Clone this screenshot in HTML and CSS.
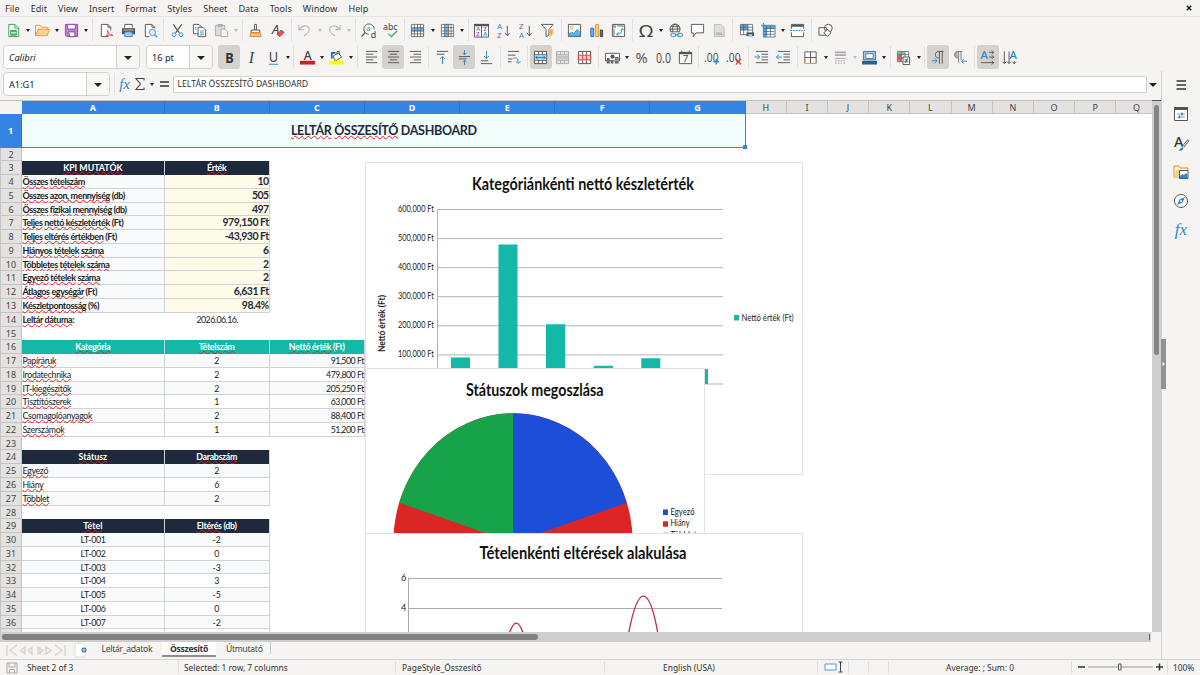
FILE: index.html
```
<!doctype html>
<html lang="hu">
<head>
    <meta charset="UTF-8">
    <meta name="viewport" content="width=device-width, initial-scale=1.0">
    <title>Összesítő</title>
    <link rel="stylesheet" href="styles.css">
</head>
<body>
    <div class="menubar">
        <span>File</span><span>Edit</span><span>View</span><span>Insert</span><span>Format</span><span>Styles</span><span>Sheet</span><span>Data</span><span>Tools</span><span>Window</span><span>Help</span>
        <svg class="close" viewBox="0 0 6 6"><path d="M.8.8l4.4 4.4M5.2.8L.8 5.2" stroke="#222" stroke-width="1.6"/></svg>
    </div>

    <!-- standard toolbar -->
    <div class="toolbar standard">
        <div class="btn"><svg viewBox="0 0 16 16"><path d="M3 1.500h6.500l4 4v9H3z" fill="#fff" stroke="#3a9c5a"/><path d="M9.500 1.500v4h4" stroke="#3a9c5a"/><path d="M5 8h6v5H5z" fill="#5cb878" stroke="#3a9c5a"/><path d="M5 10.500h6" stroke="#fff"/></svg></div><i class="caret"></i>
        <div class="btn"><svg viewBox="0 0 16 16"><path d="M.5 13.500v-11h5l1.500 2h6v2" fill="#fff3d8" stroke="#e59a35"/><path d="M.5 13.500l3-7h12l-2.500 7z" fill="#f9d38b" stroke="#e59a35"/></svg></div><i class="caret"></i>
        <div class="btn"><svg viewBox="0 0 16 16"><path d="M1.500 1.500h13v13H3l-1.500-1.500z" fill="#c77fdb" stroke="#8e45a5"/><path d="M4 1.500h8v5H4zM4.500 9.500h7v5h-7z" fill="#fff" stroke="#8e45a5"/><path d="M6 11v3" stroke="#8e45a5"/></svg></div><i class="caret"></i>
        <i class="sep"></i>
        <div class="btn"><svg viewBox="0 0 16 16"><path d="M10 14.500H2.500v-13h7l3 3V8" fill="#fff" stroke="#555"/><path d="M9.500 1.500v3h3" stroke="#555"/><path d="M6.500 14.500c3-2 4-5 3-6.500s-1 3.500 5 5.500c1 0 0-2-7 .5" stroke="#e23b4a"/></svg></div>
        <div class="btn"><svg viewBox="0 0 16 16"><path d="M4 5V1.500h8V5" fill="#fff" stroke="#555"/><path d="M1 5.500h14V12H1z" fill="#555"/><path d="M4 9.500h8v5H4z" fill="#9fd3f5" stroke="#3583b8"/><path d="M2.500 7.500h11" stroke="#ccc"/></svg></div>
        <div class="btn"><svg viewBox="0 0 16 16"><path d="M7 14.500H2.500v-13h7l3 3V6" fill="#fff" stroke="#555"/><path d="M9.500 1.500v3h3" stroke="#555"/><circle cx="10" cy="10" r="3.300" fill="#dff1fc" stroke="#3d93cf"/><path d="M12.500 12.500l2.700 2.700" stroke="#3d93cf" stroke-width="1.400"/></svg></div>
        <i class="sep"></i>
        <div class="btn"><svg viewBox="0 0 16 16"><path d="M3.500 1.500l6.500 9M12.500 1.500L6 10.500" stroke="#555" stroke-width="1.200"/><circle cx="4.300" cy="12.500" r="2.100" stroke="#3d93cf"/><circle cx="11.700" cy="12.500" r="2.100" stroke="#3d93cf"/></svg></div>
        <div class="btn"><svg viewBox="0 0 16 16"><path d="M1.500 1.500h6l2 2v8h-8z" fill="#fff" stroke="#555"/><path d="M6.500 4.500h5l3 3v7h-8z" fill="#fff" stroke="#555"/><path d="M3 4.500h2M3 6.500h2M8.500 8.500h4M8.500 10.500h4M8.500 12.500h4" stroke="#3d93cf"/></svg></div>
        <div class="btn"><svg viewBox="0 0 16 16"><path d="M1.500 2.500h10v11h-10z" fill="#ddd" stroke="#aaa"/><path d="M4 1h5v3H4z" fill="#aaa"/><path d="M7.500 6.500h4l3 3v5h-7z" fill="#f4f4f4" stroke="#aaa"/></svg></div><i class="caret off"></i>
        <i class="sep"></i>
        <div class="btn"><svg viewBox="0 0 16 16"><path d="M7 1.500h2v6H7z" fill="#fff" stroke="#555"/><path d="M3.500 7.500h9v3h-9z" fill="#fff" stroke="#555"/><path d="M3 10.500h10l1 4H2z" fill="#f9c277" stroke="#dd8427"/></svg></div>
        <div class="btn"><svg viewBox="0 0 16 16"><text x="2" y="12" font-size="14" font-style="italic" fill="#444">A</text><path d="M7.500 12l4.500-4.500 3 2.500-4.500 4.500z" fill="#ef4d5a" stroke="#c8323f"/></svg></div>
        <i class="sep"></i>
        <div class="btn"><svg viewBox="0 0 16 16"><path d="M2 2v5h5M2.500 6.500c5-6 11-3 10.500 1S9.500 11.500 7.500 14" stroke="#bbb" stroke-width="1.200"/></svg></div><i class="caret off"></i>
        <div class="btn"><svg viewBox="0 0 16 16"><path d="M14 2v5H9M13.500 6.500c-5-6-11-3-10.500 1s3.500 4 5.500 6.500" stroke="#bbb" stroke-width="1.200"/></svg></div><i class="caret off"></i>
        <i class="sep"></i>
        <div class="btn"><svg viewBox="0 0 16 16"><path d="M8.500 12A5.500 5.500 0 1 1 14 7" fill="#fff" stroke="#555"/><path d="M4.500 10L.8 14.500" stroke="#555" stroke-width="1.500"/><text x="5.500" y="9" font-size="8" fill="#2d87c8">a</text><text x="10.500" y="15.500" font-size="9.500" fill="#444">d</text></svg></div>
        <div class="btn"><svg viewBox="0 0 16 16"><text x="0" y="7.500" font-size="9" textLength="15.500" lengthAdjust="spacingAndGlyphs" fill="#444">abc</text><path d="M6 11.500l3 3 6-6" stroke="#35a86b" stroke-width="1.400"/></svg></div>
        <i class="sep"></i>
        <div class="btn"><svg viewBox="0 0 16 16"><path d="M1.500 1.500h13v13h-13z" fill="#fff"/><path d="M1 5h14v4H1z" fill="#74bdf0"/><path d="M1.500 1.500h13v13h-13zM1.500 5h13M1.500 8.500h13M1.500 11.500h13M4.700 1.500v13M8 1.500v13M11.300 1.500v13" stroke="#555" stroke-width=".8"/></svg></div><i class="caret"></i>
        <div class="btn"><svg viewBox="0 0 16 16"><path d="M1.500 1.500h13v13h-13z" fill="#fff"/><path d="M5 1h4v14H5z" fill="#74bdf0"/><path d="M1.500 1.500h13v13h-13zM1.500 5h13M1.500 8.500h13M1.500 11.500h13M4.700 1.500v13M9 1.500v13M11.800 1.500v13" stroke="#555" stroke-width=".8"/></svg></div><i class="caret"></i>
        <i class="sep"></i>
        <div class="btn"><svg viewBox="0 0 16 16"><path d="M.5 1.500h15v13.500H.5zM8 1.500V15" fill="#fff" stroke="#555"/><path d="M0 1h16v2.500H0z" fill="#555"/><g font-size="6" font-weight="600"><text x="2.300" y="8.700" fill="#2d87c8">A</text><text x="2.500" y="14" fill="#a643bd">Z</text><text x="10" y="8.700" fill="#a643bd">Z</text><text x="9.800" y="14" fill="#2d87c8">A</text></g></svg></div>
        <div class="btn"><svg viewBox="0 0 16 16"><text x="1" y="6.500" font-size="8.500" fill="#2d87c8">A</text><text x="1" y="16" font-size="8.500" fill="#a643bd">Z</text><path d="M12 3v10.500M9.500 10.500l2.500 3 2.500-3" stroke="#555"/></svg></div>
        <div class="btn"><svg viewBox="0 0 16 16"><text x="1" y="6.500" font-size="8.500" fill="#a643bd">Z</text><text x="1" y="16" font-size="8.500" fill="#2d87c8">A</text><path d="M12 3v10.500M9.500 10.500l2.500 3 2.500-3" stroke="#555"/></svg></div>
        <div class="btn"><svg viewBox="0 0 16 16"><path d="M1.500 1.500h12.500L9.500 7v6l-3 1.500V7z" fill="#fff" stroke="#555"/><path d="M11 7l-2 4.500h2.500L10 15.500l5-5.500h-2l1.500-3z" fill="#f5a742"/></svg></div>
        <i class="sep"></i>
        <div class="btn"><svg viewBox="0 0 16 16"><path d="M1.500 1.500h13v13h-13z" fill="#fff" stroke="#555"/><circle cx="5" cy="5" r="1.500" stroke="#f0a030"/><path d="M2 14v-2l3-2 2 1 4-4 3 3v4z" fill="#69b4ea" stroke="#2d87c8"/></svg></div>
        <div class="btn"><svg viewBox="0 0 16 16"><path d="M2 5.500h3v9H2z" fill="#69b4ea" stroke="#2d6f9f"/><path d="M7 1.500h3v13H7z" fill="#fbd08c" stroke="#e0942f"/><path d="M12 7.500h2.500v7H12z" fill="#666" stroke="#444"/></svg></div>
        <div class="btn"><svg viewBox="0 0 16 16"><path d="M1.500 1.500h13v13h-13z" fill="#fff" stroke="#555"/><path d="M2 2h3.500v3.500H2zM6.500 2H14v2H6.500zM2 6.500h2V14H2z" fill="#aaa"/><path d="M6 12c4 0 6-2 6-6M8 10l-2 2 2 2M10 8l2-2 2 2" stroke="#2d87c8"/></svg></div>
        <i class="sep"></i>
        <div class="btn"><svg viewBox="0 0 16 16"><text x="0" y="14.500" font-size="18" textLength="15" lengthAdjust="spacingAndGlyphs" fill="#444">Ω</text></svg></div><i class="caret"></i>
        <div class="btn"><svg viewBox="0 0 16 16"><circle cx="7.500" cy="6.500" r="5.300" stroke="#555"/><ellipse cx="7.500" cy="6.500" rx="2.500" ry="5.300" stroke="#555"/><path d="M2 6.500h11M3 3.500h9M3 9.500h9" stroke="#555"/><path d="M2.500 10h13v5.500h-13z" fill="#f5f4f2"/><rect x="3" y="11" width="5.500" height="3.500" rx="1.700" stroke="#2d87c8"/><rect x="10" y="11" width="5.500" height="3.500" rx="1.700" stroke="#2d87c8"/><path d="M7 12.700h5" stroke="#2d87c8"/></svg></div>
        <div class="btn"><svg viewBox="0 0 16 16"><path d="M1.500 1.500h13v9h-8l-3 4v-4h-2z" fill="#fff" stroke="#555"/></svg></div>
        <div class="btn"><svg viewBox="0 0 16 16"><path d="M2.500 1.500h7l3.500 3.500v9.500H2.500z" fill="#ddd" stroke="#bbb"/><path d="M4 10h7v3H4z" fill="#bbb"/></svg></div>
        <i class="sep"></i>
        <div class="btn"><svg viewBox="0 0 16 16"><path d="M1.500 1.500h13v11h-13z" fill="#fff"/><path d="M1.500 1.500h8v6h-8z" fill="#53a9e6"/><path d="M1.500 1.500h13v11h-13zM1.500 4.500h13M1.500 7.500h13M5 1.500v11M9.500 1.500v11" stroke="#555" stroke-width=".8"/><path d="M8 10h8v4H8z" fill="#555"/><path d="M10 12h4v3h-4z" fill="#9fd3f5"/></svg></div>
        <div class="btn"><svg viewBox="0 0 16 16"><path d="M3.500 3.500h11v11h-11z" fill="#fff"/><path d="M3 3h12v3H3zM3 3h3v12H3z" fill="#53a9e6"/><path d="M2.500 2.500h12.500v12.500H2.500zM2.500 6h12M2.500 9h12M2.500 12h12M6 2.500v12M10 2.500v12" stroke="#44617a" stroke-width=".8"/><path d="M0 2.500h5M2.500 0v5" stroke="#2d87c8"/></svg></div><i class="caret"></i>
        <div class="btn"><svg viewBox="0 0 16 16"><path d="M1.500 6V1.500h13V6M1.500 10v4.500h13V10" fill="#fff" stroke="#555"/><path d="M1.500 3h13" stroke="#555" stroke-width="2"/><path d="M0 8h16" stroke="#2d87c8" stroke-dasharray="2 1"/></svg></div>
        <i class="sep"></i>
        <div class="btn"><svg viewBox="0 0 16 16"><path d="M1 5h8v8H1z" stroke="#555"/><circle cx="11" cy="5.500" r="4.200" stroke="#555"/><path d="M10 6.500l3.700 4-3.700 4-3.700-4z" fill="#f5f4f2" stroke="#555"/></svg></div>
    </div>

    <!-- formatting toolbar -->
    <div class="toolbar formatting">
        <div class="combo font-name"><em>Calibri</em><b></b></div>
        <div class="combo font-size"><span>16 pt</span><b></b></div>
        <div class="btn on"><svg viewBox="0 0 16 16"><text x="3.500" y="13.500" font-size="15.500" font-weight="700" textLength="9" lengthAdjust="spacingAndGlyphs" fill="#333">B</text></svg></div>
        <div class="btn"><svg viewBox="0 0 16 16"><text class="serif" x="5" y="13.500" font-size="17" font-style="italic" fill="#444">I</text></svg></div>
        <div class="btn"><svg viewBox="0 0 16 16"><text x="3" y="12.500" font-size="15" textLength="10" lengthAdjust="spacingAndGlyphs" fill="#444">U</text><path d="M3 15.200h10" stroke="#2d87c8"/></svg></div><i class="caret"></i>
        <i class="sep"></i>
        <div class="btn"><svg viewBox="0 0 16 16"><text x="4" y="10.500" font-size="13" font-weight="500" fill="#444">A</text><path d="M0 11.500h16v4H0z" fill="#c9211e"/></svg></div><i class="caret"></i>
        <div class="btn"><svg viewBox="0 0 16 16"><path d="M4.500 6.500l5.500-3.500 3.500 4.500-5 3.500H6z" fill="#fff" stroke="#555"/><path d="M8.500 5V1.500h2.500V5" stroke="#555"/><path d="M3 9V3h4" stroke="#1d6eaa" stroke-width="1.800"/><path d="M0 11.500h16v4H0z" fill="#ff0"/></svg></div><i class="caret"></i>
        <i class="sep"></i>
        <div class="btn"><svg viewBox="0 0 16 16"><path d="M2 1.500h12M2 4.500h8M2 7.500h12M2 10.500h8M2 13.500h12" stroke="#555"/></svg></div>
        <div class="btn on"><svg viewBox="0 0 16 16"><path d="M2 1.500h12M4 4.500h8M2 7.500h12M4 10.500h8M2 13.500h12" stroke="#555"/></svg></div>
        <div class="btn"><svg viewBox="0 0 16 16"><path d="M2 1.500h12M6 4.500h8M2 7.500h12M6 10.500h8M2 13.500h12" stroke="#555"/></svg></div>
        <i class="sep"></i>
        <div class="btn"><svg viewBox="0 0 16 16"><path d="M2 1.500h12M2 4.500h8" stroke="#555"/><path d="M8 15V7M5.500 9.500L8 7l2.500 2.500" stroke="#2d87c8"/></svg></div>
        <div class="btn on"><svg viewBox="0 0 16 16"><path d="M2 7h12M2 9.500h8" stroke="#555"/><path d="M8 0v5M6 3l2 2 2-2M8 16v-5M6 13l2-2 2 2" stroke="#2d87c8"/></svg></div>
        <div class="btn"><svg viewBox="0 0 16 16"><path d="M2 11.500h8M2 14.500h12" stroke="#555"/><path d="M8 1v8M5.500 6.500L8 9l2.500-2.500" stroke="#2d87c8"/></svg></div>
        <i class="sep"></i>
        <div class="btn"><svg viewBox="0 0 16 16"><path d="M2 1.500h12M2 5.500h8M2 9.500h5M2 12.500h4" stroke="#555"/><path d="M8 8.500h3q2 0 2 5M10.500 12l2.500 2.500 2.500-2.500" stroke="#2d87c8"/></svg></div>
        <i class="sep"></i>
        <div class="btn on"><svg viewBox="0 0 16 16"><path d="M1.500 1.500h13v13h-13z" fill="#fff" stroke="#555"/><path d="M1.500 5h13M1.500 11h13M6 1.500V5M10 1.500V5M6 11v3.500M10 11v3.500" stroke="#555"/><path d="M2 5.500h12v5H2z" fill="#a8d8f8"/><path d="M3 8h10M5 6L3 8l2 2M11 6l2 2-2 2" stroke="#1d77b8"/></svg></div>
        <div class="btn"><svg viewBox="0 0 16 16"><path d="M1.500 1.500h13v13h-13zM1.500 5h13M1.500 11h13M6 1.500V5M10 1.500V5M6 11v3.500M10 11v3.500" fill="#e7e6e5" stroke="#aaa"/><path d="M2 6h12v4H2z" fill="#c5c5c5"/></svg></div>
        <div class="btn"><svg viewBox="0 0 16 16"><path d="M1.500 1.500h13v13h-13zM6 1.500V5M10 1.500V5M6 11v3.500M10 11v3.500" fill="#fff" stroke="#555"/><path d="M1.500 5.500h13v5h-13zM6 5.500v5M10 5.500v5" fill="#fbd3d3" stroke="#d33"/></svg></div>
        <i class="sep"></i>
        <div class="btn"><svg viewBox="0 0 16 16"><path d="M.5 3.500h15v8H.5z" fill="#fff" stroke="#555"/><circle cx="8" cy="7" r="2.200" fill="#555"/><path d="M2 8.500h3v6H2zM6 11.500h3v3H6zM10.500 7.500h4v7h-4z" fill="#666"/><path d="M10.500 9.500h4M10.500 11.500h4" stroke="#ccc" stroke-width=".7"/></svg></div><i class="caret"></i>
        <div class="btn"><svg viewBox="0 0 16 16"><text x="1.500" y="14" font-size="16" textLength="13" lengthAdjust="spacingAndGlyphs" fill="#555">%</text></svg></div>
        <div class="btn"><svg viewBox="0 0 16 16"><text x="0" y="14" font-size="15" textLength="16" lengthAdjust="spacingAndGlyphs" fill="#555">0.0</text></svg></div>
        <div class="btn"><svg viewBox="0 0 16 16"><path d="M1.500 2.500h13v12h-13z" fill="#fff" stroke="#555"/><path d="M1 2h14v2.500H1zM3.500.5h1v2h-1zM11.500.5h1v2h-1z" fill="#555"/><text x="5" y="13.300" font-size="10.500" fill="#444">7</text></svg></div>
        <i class="sep"></i>
        <div class="btn"><svg viewBox="0 0 16 16"><text x="-1" y="13" font-size="14" textLength="15.500" lengthAdjust="spacingAndGlyphs" fill="#555">.00</text><path d="M9 12.500h6M12 9.500v6" stroke="#2d87c8" stroke-width="1.400"/></svg></div>
        <div class="btn"><svg viewBox="0 0 16 16"><text x="-1" y="13" font-size="14" textLength="15.500" lengthAdjust="spacingAndGlyphs" fill="#555">.00</text><path d="M9.500 9.500l5.500 6M15 9.500l-5.500 6" stroke="#e03b3b" stroke-width="1.300"/></svg></div>
        <i class="sep"></i>
        <div class="btn"><svg viewBox="0 0 16 16"><path d="M2 1.500h13M8 4.500h7M8 7.500h7M8 10.500h7M2 13.500h13" stroke="#555"/><path d="M.5 7.500h5.500M3.500 5L6 7.500 3.500 10" stroke="#2d87c8"/></svg></div>
        <div class="btn"><svg viewBox="0 0 16 16"><path d="M2 1.500h13M8 4.500h7M8 7.500h7M8 10.500h7M2 13.500h13" stroke="#555"/><path d="M.5 7.500h5.500M3 5L.5 7.500 3 10" stroke="#2d87c8"/></svg></div>
        <i class="sep"></i>
        <div class="btn"><svg viewBox="0 0 16 16"><path d="M2 14V2h12v12M8 2v12M2 8h12" fill="#fff" stroke="#555"/><path d="M1.500 14.300h13" stroke="#e59a45" stroke-width="1.200"/></svg></div><i class="caret"></i>
        <div class="btn"><svg viewBox="0 0 16 16"><path d="M2 2.500h12M2 5.500h12" stroke="#aaa" stroke-width="2"/><path d="M2 9h12" stroke="#aaa"/><path d="M2 11.500h12M2 14h12" stroke="#aaa" stroke-dasharray="2 1"/></svg></div><i class="caret off"></i>
        <div class="btn"><svg viewBox="0 0 16 16"><path d="M1.500 10.500v-9h13v9z" fill="#9ccdf0" stroke="#44719a"/><path d="M4 4h8v5H4z" fill="#fff" stroke="#555" stroke-width=".8"/><path d="M0 11.500h16v4H0z" fill="#2a6099"/></svg></div><i class="caret"></i>
        <i class="sep"></i>
        <div class="btn"><svg viewBox="0 0 16 16"><path d="M1.500 1.500h12v11h-12z" fill="#fff"/><path d="M2 2h7v3H2z" fill="#79ce91"/><path d="M2 5h4v7H2z" fill="#ee6670"/><path d="M1.500 1.500h12v11h-12zM1.500 5h12M1.500 8.500h12M5.500 1.500v11M9.500 1.500v11" stroke="#555" stroke-width=".8"/><path d="M7.500 7.500h7v8h-7z" fill="#fff" stroke="#555"/><path d="M9 10.500h4M9 12.500h4M12.500 9l-3 5" stroke="#555"/></svg></div><i class="caret"></i>
        <i class="sep"></i>
        <div class="btn on"><svg viewBox="0 0 16 16"><path d="M8 8.500c-4.500 0-4.500-7 0-7h5.500M9 1.500v13M12 1.500v13" stroke="#555"/><path d="M1 11.500h5.500M4 9l2.500 2.500L4 14" stroke="#2d87c8"/></svg></div>
        <div class="btn"><svg viewBox="0 0 16 16"><path d="M5 8.500c-4.500 0-4.500-7 0-7z" fill="#aaa"/><path d="M5 8.500c-4.500 0-4.500-7 0-7h5M6 1.500v12M8.500 1.500v9" stroke="#777"/><path d="M9 12h6M11.500 9.500L9 12l2.500 2.500" stroke="#2d87c8"/></svg></div>
        <i class="sep"></i>
        <div class="btn on"><svg viewBox="0 0 16 16"><text x=".5" y="10" font-size="12" font-weight="500" fill="#2d87c8">A</text><path d="M9.500 2.500h5M12.500.5l2 2-2 2M9.500 7.500h5M12.500 5.500l2 2-2 2M1 13.500h14M12.500 11.500l2 2-2 2" stroke="#555"/></svg></div>
        <div class="btn"><svg viewBox="0 0 16 16"><text x="8" y="10" font-size="12" font-weight="500" fill="#2d87c8">A</text><path d="M2.500 1.500v13M.5 12.500l2 2 2-2M7.500 1.500v13M5.500 12.500l2 2 2-2M13 11.500v3M11 12.500l2 2 2-2" stroke="#555"/></svg></div>
    </div>

    <div class="main">
        <div class="workspace">
            <div class="formulabar">
                <div class="combo name-box"><span>A1:G1</span><b></b></div>
                <i class="sep"></i>
                <span class="fx">fx</span>
                <svg class="sigma" viewBox="0 0 10 14"><path d="M9 3.500V1.500H1L5.500 7 1 12.500h8v-2" stroke="#444" stroke-width="1.100"/></svg>
                <i class="caret"></i>
                <svg class="equals" viewBox="0 0 9 6"><path d="M0 1h9M0 5h9" stroke="#333" stroke-width="1.500"/></svg>
                <div class="formula">LELTÁR ÖSSZESÍTŐ DASHBOARD</div>
                <i class="caret big"></i>
            </div>

            <div class="grid-area">
                <div class="sheet">
                    <div class="row heads">
                        <div class="rh"></div><div class="a sel">A</div><div class="b sel">B</div><div class="c sel">C</div><div class="c sel">D</div><div class="c sel">E</div><div class="c sel">F</div><div class="c sel">G</div><div class="n">H</div><div class="n">I</div><div class="n">J</div><div class="n">K</div><div class="n">L</div><div class="n">M</div><div class="n">N</div><div class="n">O</div><div class="n">P</div><div class="n">Q</div>
                    </div>
                    <div class="row title-row"><div class="rh sel">1</div><div class="title"><span><u>LELTÁR</u>&nbsp;<u>ÖSSZESÍTŐ</u>&nbsp;DASHBOARD</span></div></div>
                    <div class="row"><div class="rh">2</div></div>
                    <div class="row dark"><div class="rh">3</div><div class="a"><u>KPI MUTATÓK</u></div><div class="b"><u>Érték</u></div></div>
                    <div class="row kpi"><div class="rh">4</div><div class="a"><u>Összes</u>&nbsp;<u>tételszám</u></div><div class="b">10</div></div>
                    <div class="row kpi"><div class="rh">5</div><div class="a"><u>Összes</u>&nbsp;<u>azon, mennyiség</u>&nbsp;(db)</div><div class="b">505</div></div>
                    <div class="row kpi"><div class="rh">6</div><div class="a"><u>Összes</u>&nbsp;<u>fizikai mennyiség</u>&nbsp;(db)</div><div class="b">497</div></div>
                    <div class="row kpi"><div class="rh">7</div><div class="a"><u>Teljes</u>&nbsp;<u>nettó készletérték</u>&nbsp;(Ft)</div><div class="b">979,150 Ft</div></div>
                    <div class="row kpi"><div class="rh">8</div><div class="a"><u>Teljes</u>&nbsp;<u>eltérés</u>&nbsp;<u>értékben</u>&nbsp;(Ft)</div><div class="b">-43,930 Ft</div></div>
                    <div class="row kpi"><div class="rh">9</div><div class="a"><u>Hiányos</u>&nbsp;<u>tételek</u>&nbsp;<u>száma</u></div><div class="b">6</div></div>
                    <div class="row kpi"><div class="rh">10</div><div class="a"><u>Többletes</u>&nbsp;<u>tételek</u>&nbsp;<u>száma</u></div><div class="b">2</div></div>
                    <div class="row kpi"><div class="rh">11</div><div class="a"><u>Egyező</u>&nbsp;<u>tételek</u>&nbsp;<u>száma</u></div><div class="b">2</div></div>
                    <div class="row kpi"><div class="rh">12</div><div class="a"><u>Átlagos</u>&nbsp;<u>egységár</u>&nbsp;(Ft)</div><div class="b">6,631 Ft</div></div>
                    <div class="row kpi"><div class="rh">13</div><div class="a"><u>Készletpontosság</u>&nbsp;(%)</div><div class="b">98.4%</div></div>
                    <div class="row date"><div class="rh">14</div><div class="a"><u>Leltár</u>&nbsp;<u>dátuma</u>:</div><div class="b">2026.06.16.</div></div>
                    <div class="row"><div class="rh">15</div></div>
                    <div class="row teal"><div class="rh">16</div><div class="a"><u>Kategória</u></div><div class="b"><u>Tételszám</u></div><div class="c"><u>Nettó</u>&nbsp;<u>érték</u>&nbsp;(Ft)</div></div>
                    <div class="row data alt"><div class="rh">17</div><div class="a"><u>Papíráruk</u></div><div class="b">2</div><div class="c">91,500 Ft</div></div>
                    <div class="row data"><div class="rh">18</div><div class="a"><u>Irodatechnika</u></div><div class="b">2</div><div class="c">479,800 Ft</div></div>
                    <div class="row data alt"><div class="rh">19</div><div class="a"><u>IT-kiegészítők</u></div><div class="b">2</div><div class="c">205,250 Ft</div></div>
                    <div class="row data"><div class="rh">20</div><div class="a"><u>Tisztítószerek</u></div><div class="b">1</div><div class="c">63,000 Ft</div></div>
                    <div class="row data alt"><div class="rh">21</div><div class="a"><u>Csomagolóanyagok</u></div><div class="b">2</div><div class="c">88,400 Ft</div></div>
                    <div class="row data"><div class="rh">22</div><div class="a"><u>Szerszámok</u></div><div class="b">1</div><div class="c">51,200 Ft</div></div>
                    <div class="row"><div class="rh">23</div></div>
                    <div class="row dark"><div class="rh">24</div><div class="a"><u>Státusz</u></div><div class="b"><u>Darabszám</u></div></div>
                    <div class="row data alt"><div class="rh">25</div><div class="a"><u>Egyező</u></div><div class="b">2</div></div>
                    <div class="row data"><div class="rh">26</div><div class="a"><u>Hiány</u></div><div class="b">6</div></div>
                    <div class="row data alt"><div class="rh">27</div><div class="a"><u>Többlet</u></div><div class="b">2</div></div>
                    <div class="row"><div class="rh">28</div></div>
                    <div class="row dark"><div class="rh">29</div><div class="a"><u>Tétel</u></div><div class="b"><u>Eltérés</u>&nbsp;(db)</div></div>
                    <div class="row data mid alt"><div class="rh">30</div><div class="a">LT-001</div><div class="b">-2</div></div>
                    <div class="row data mid"><div class="rh">31</div><div class="a">LT-002</div><div class="b">0</div></div>
                    <div class="row data mid alt"><div class="rh">32</div><div class="a">LT-003</div><div class="b">-3</div></div>
                    <div class="row data mid"><div class="rh">33</div><div class="a">LT-004</div><div class="b">3</div></div>
                    <div class="row data mid alt"><div class="rh">34</div><div class="a">LT-005</div><div class="b">-5</div></div>
                    <div class="row data mid"><div class="rh">35</div><div class="a">LT-006</div><div class="b">0</div></div>
                    <div class="row data mid alt"><div class="rh">36</div><div class="a">LT-007</div><div class="b">-2</div></div>
                    <div class="row data mid"><div class="rh"></div><div class="a"></div><div class="b"></div></div>

                    <!-- charts float over the cells -->
                    <svg class="chart chart-bar" viewBox="0 0 438 313">
                        <rect x=".5" y=".5" width="437" height="312" fill="#fff" stroke="#e2e2e2"/>
                        <text class="ct" x="107" y="27.500" textLength="222" lengthAdjust="spacingAndGlyphs">Kategóriánkénti nettó készletérték</text>
                        <path d="M68 47.500h290M68 76.600h290M68 105.700h290M68 134.700h290M68 163.800h290M68 192.900h290M68 222h290" stroke="#b3b3b3"/>
                        <path d="M72.500 47v175" stroke="#b3b3b3"/>
                        <path d="M67 40h5v190h-5z" fill="#fff"/>
                        <g fill="#14b8a6"><path d="M86 195.400h19V222H86zM133.500 82.400h19V222h-19zM181 162.300h19.200V222H181zM228.700 203.700H248V222h-19.300zM276.300 196.300h19V222h-19zM324 207.100h19V222h-19z"/><path d="M369 153h5v5.500h-5z"/></g>
                        <g class="cl">
                            <text x="33" y="50" textLength="36" lengthAdjust="spacingAndGlyphs">600,000 Ft</text>
                            <text x="33" y="79" textLength="36" lengthAdjust="spacingAndGlyphs">500,000 Ft</text>
                            <text x="33" y="108.200" textLength="36" lengthAdjust="spacingAndGlyphs">400,000 Ft</text>
                            <text x="33" y="137.200" textLength="36" lengthAdjust="spacingAndGlyphs">300,000 Ft</text>
                            <text x="33" y="166.300" textLength="36" lengthAdjust="spacingAndGlyphs">200,000 Ft</text>
                            <text x="33" y="195.400" textLength="36" lengthAdjust="spacingAndGlyphs">100,000 Ft</text>
                            <text x="376.500" y="158.500" textLength="52" lengthAdjust="spacingAndGlyphs">Nettó érték (Ft)</text>
                        </g>
                        <text class="cl axis" transform="translate(20 190) rotate(-90)" textLength="57" lengthAdjust="spacingAndGlyphs">Nettó érték (Ft)</text>
                    </svg>
                    <svg class="chart chart-pie" viewBox="0 0 340 170">
                        <rect x=".5" y=".5" width="339" height="180" fill="#fff" stroke="#e2e2e2"/>
                        <text class="ct" x="101" y="27.500" textLength="137.500" lengthAdjust="spacingAndGlyphs">Státuszok megoszlása</text>
                        <ellipse cx="148" cy="174.700" rx="119.700" ry="129.400" fill="#dc2626"/>
                        <path d="M148 174.700V45.300A119.700 129.400 0 0 1 261.800 134.700z" fill="#1d4ed8"/>
                        <path d="M148 174.700V45.300A119.700 129.400 0 0 0 34.200 134.700z" fill="#16a34a"/>
                        <path d="M298 141.500h5v5.500h-5z" fill="#1d4ed8"/><path d="M298 153.300h5v5.500h-5z" fill="#dc2626"/><path d="M298 164.700h5v5.500h-5z" fill="#16a34a"/>
                        <g class="cl">
                            <text x="305.500" y="146.500" textLength="24" lengthAdjust="spacingAndGlyphs">Egyező</text>
                            <text x="305.500" y="158.300" textLength="19" lengthAdjust="spacingAndGlyphs">Hiány</text>
                            <text x="305.500" y="170" textLength="26.500" lengthAdjust="spacingAndGlyphs">Többlet</text>
                        </g>
                    </svg>
                    <svg class="chart chart-line" viewBox="0 0 438 100">
                        <rect x=".5" y=".5" width="437" height="120" fill="#fff" stroke="#e2e2e2"/>
                        <text class="ct" x="114.500" y="26" textLength="207" lengthAdjust="spacingAndGlyphs">Tételenkénti eltérések alakulása</text>
                        <path d="M43 45.500h314M43 75.500h314M43.500 45v60" stroke="#a9a9a9"/>
                        <g class="cl"><text x="36" y="48">6</text><text x="36" y="78">4</text></g>
                        <path d="M144 101c5-14.500 9.500-14.500 14.500 0M263.500 101C273 50.500 284 50.500 293 101" stroke="#c02a49" stroke-width="1.300"/>
                    </svg>
                </div>
                <div class="vscroll"><div class="thumb"></div></div>
            </div>
            <div class="hscroll"><div class="thumb"></div></div>

            <div class="tabs">
                <svg class="nav" viewBox="0 0 60 12"><path d="M1 1v11M11 1L4 6.500l7 5M19 3l-4 3.500 4 3.500zM26 3l-4 3.500 4 3.500zM34 3v7M32 3l5 3.500-5 3.500zM40 3l5 3.500-5 3.500zM49 1l7 5.500-7 5M59 1v11" stroke="#d2d1cf" stroke-width="1.200"/></svg>
                <svg class="add" viewBox="0 0 14 14"><path d="M1 0h7l3 3v11H1z" fill="#fff" stroke="#ddd"/><circle cx="10" cy="7" r="2.500" fill="#2f66b5"/><path d="M8.500 7h3M10 5.500v3" stroke="#fff" stroke-width=".8"/></svg>
                <span>Leltár_adatok</span>
                <span class="active">Összesítő</span>
                <span class="last">Útmutató</span>
            </div>
        </div>

        <div class="sidebar">
            <svg class="handle" viewBox="0 0 5 50"><path d="M0 0h5v50H0z" fill="#929292"/><path d="M1.500 23l2.500 2-2.500 2z" fill="#fff"/></svg>
            <svg viewBox="0 0 16 16"><path d="M3.500 4h9.500M3.500 8h9.500M3.500 12h9.500" stroke="#333" stroke-width="1.500"/></svg>
            <svg viewBox="0 0 16 16"><path d="M1.500 1.500h13v13h-13z" fill="#fff" stroke="#555"/><path d="M1 1h14v3H1z" fill="#555"/><path d="M4 8h8M4 11h8" stroke="#999"/><path d="M9 6.500v3M6.500 9.500v3" stroke="#2d87c8" stroke-width="1.500"/></svg>
            <svg viewBox="0 0 16 16"><text x="1" y="12" font-size="14.500" font-weight="500" fill="#333">A</text><path d="M15.500 5L10 12" stroke="#666" stroke-width="2.500"/><path d="M15 5.500L10 12" stroke="#fff"/><path d="M5 15.500c2 0 2-3.500 5-3 1 2-1 4-5 3z" fill="#2d87c8"/></svg>
            <svg viewBox="0 0 16 16"><path d="M1 13V2h5l1.500 2H15v2M1 13h5" fill="#fff3df" stroke="#e08a2c"/><path d="M1 13L3.500 6H8v7z" fill="#f9cf85"/><path d="M6.500 6.500h8.500v8H6.500z" fill="#fff" stroke="#555"/><path d="M7 14v-2l2.500-2 1.500 1 2-2 1.500 2v3z" fill="#2d87c8"/></svg>
            <svg viewBox="0 0 16 16"><circle cx="8" cy="8" r="6.500" fill="#fff" stroke="#555"/><path d="M12 4l-2.500 5.500L4 12l2.500-5.500z" fill="#2d87c8"/><circle cx="8" cy="8" r="1" fill="#fff"/></svg>
            <span class="fx">fx</span>
        </div>
    </div>

    <div class="statusbar">
        <svg class="doc" viewBox="0 0 12 12"><path d="M1 1h10v10H1zM3 1v4h6V1M3.500 11V7.500h5V11" stroke="#aaa"/></svg>
        <div class="s-sheet">Sheet 2 of 3</div>
        <div class="s-selected">Selected: 1 row, 7 columns</div>
        <div class="s-style">PageStyle_Összesítő</div>
        <div class="s-lang">English (USA)</div>
        <div class="s-mode"><svg viewBox="0 0 18 12"><path d="M1 3h11v6H1z" fill="#fff" stroke="#4c9cd0"/><path d="M14.500 1h4M16.500 1v10M14.500 11h4" stroke="#444"/></svg></div>
        <div class="s-box"></div>
        <div class="s-box"></div>
        <div class="s-sum">Average: ; Sum: 0</div>
        <div class="s-zoom"><svg viewBox="0 0 86 10"><path d="M0 5h7M78 5h7M81.500 1.500v7" stroke="#333" stroke-width="1.500"/><path d="M10 5h65" stroke="#999"/><path d="M40.500 2h2.500v6h-2.500z" fill="#eee" stroke="#555"/></svg></div>
        <div class="s-pct">100%</div>
    </div>
</body>
</html>
```
FILE: styles.css
```
* {
    box-sizing: border-box;
}
body {
    margin: 0;
    width: 1200px;
    height: 675px;
    overflow: hidden;
    display: flex;
    flex-direction: column;
    background-color: #f5f4f2;
    color: #333;
    font-family: "Noto Sans", sans-serif;
    font-size: 9px;
}
svg {
    display: block;
    fill: none;
    flex: none;
    overflow: visible;
}
svg text {
    stroke: none;
}
.serif {
    font-family: "Liberation Serif", serif;
}

/* Menu */
.menubar {
    height: 17px;
    flex: none;
    display: flex;
    align-items: center;
    gap: 11.1px;
    padding-left: 5px;
    font-size: 9.1px;
    border-bottom: 1px solid #e6e5e3;
}
.close {
    width: 6px;
    height: 6px;
    margin: 0 8px 0 auto;
}

/* Toolbars */
.toolbar {
    display: flex;
    align-items: center;
    flex: none;
}
.standard {
    height: 26px;
    padding-left: 2px;
}
.formatting {
    height: 28px;
    padding-left: 3px;
}
.btn {
    width: 22px;
    height: 24px;
    flex: none;
    display: flex;
    align-items: center;
    justify-content: center;
    border-radius: 3px;
}
.btn svg {
    width: 15px;
    height: 15px;
}
.btn.on {
    background-color: #d5d1ce;
}
.caret {
    width: 7.3px;
    height: 4px;
    flex: none;
    display: flex;
    justify-content: center;
}
.caret::before,
.combo b::before {
    content: "";
    border: 2.5px solid transparent;
    border-top: 3px solid #222;
    border-bottom: 0;
    margin-top: 1px;
}
.caret.off::before {
    border-top-color: #bbb;
}
.sep {
    width: 1px;
    height: 22px;
    margin: 0 2.1px;
    flex: none;
    background-color: #e3e1df;
}
.combo {
    height: 24px;
    display: flex;
    flex: none;
    border: 1px solid #d3d0cd;
    border-radius: 4px;
    background-color: #fff;
    align-items: center;
    padding-left: 5px;
    color: #222;
    font-size: 9.2px;
}
.combo b {
    margin-left: auto;
    width: 23px;
    height: 100%;
    border-left: 1px solid #d3d0cd;
    border-radius: 0 3px 3px 0;
    background-color: #f8f7f6;
    display: flex;
    align-items: center;
    justify-content: center;
}
.combo b::before,
.caret.big::before {
    border-width: 4px 4px 0;
}
.font-name {
    width: 137px;
    margin-right: 6px;
}
.font-size {
    width: 67px;
    margin-right: 5px;
}

/* Formula bar */
.main {
    display: flex;
    height: 588px;
    flex: none;
}
.workspace {
    width: 1161px;
    flex: none;
}
.formulabar {
    height: 29px;
    padding: 0 0 3px 3px;
    display: flex;
    align-items: center;
}
.name-box {
    width: 107px;
    margin-right: 2px;
}
.fx {
    font-family: "Liberation Serif", serif;
    font-style: italic;
    font-size: 15px;
    line-height: 16px;
    color: #2d87c8;
}
.formulabar .fx {
    width: 14px;
    margin-left: 2px;
}
.sigma {
    width: 10px;
    height: 14px;
    margin: 0 3px 0 2px;
}
.equals {
    width: 9px;
    height: 6px;
    margin: 0 4px 0 5px;
}
.formula {
    width: 974px;
    height: 17px;
    line-height: 15px;
    border: 1px solid #d3d0cd;
    background-color: #fff;
    padding-left: 3px;
    font-size: 8.7px;
    white-space: nowrap;
    letter-spacing: -0.02px;
}
.caret.big {
    width: 12px;
}

/* Sheet */
.grid-area {
    display: flex;
    height: 532px;
}
.sheet {
    position: relative;
    width: 1152px;
    height: 532px;
    overflow: hidden;
    background-color: #fff;
    font-family: Lato, sans-serif;
    font-size: 8.8px;
    color: #222;
}
.row {
    display: flex;
    height: 13.78px;
    line-height: 13px;
    white-space: nowrap;
}
.rh,
.heads .n {
    flex: none;
    background-color: #e3e2e0;
    border: solid #c6c4c2;
    border-width: 0 1px 1px 0;
    color: #444;
    text-align: center;
    font-family: "Noto Sans", sans-serif;
    font-size: 9px;
    line-height: 14px;
}
.rh {
    width: 22px;
    border-left: 1px solid #c6c4c2;
}
.a,
.b,
.c,
.n {
    flex: none;
    text-align: center;
}
.a {
    width: 142.7px;
}
.b {
    width: 105px;
}
.c {
    width: 95.2px;
}
.n {
    width: 41.2px;
}
.heads {
    height: 14px;
    border-top: 1px solid #c6c4c2;
}
.heads .rh {
    background-color: #f5f4f2;
    border-color: #f5f4f2;
}
.heads .n {
    line-height: 13px;
}
.sel {
    background-color: #3584e4;
    border: solid #2c74cc;
    border-width: 0 1px 0 0;
    color: #fff;
    font-family: "Noto Sans", sans-serif;
    font-size: 9px;
    font-weight: bold;
    line-height: 13px;
}
.title-row {
    height: 33.6px;
}
.title-row .rh {
    background-color: #3584e4;
    color: #fff;
    line-height: 34px;
}
.title {
    width: 724px;
    background-color: #f0fdfa;
    border: solid #3584e4;
    border-width: 0 1px 1px 0;
    color: #1e293b;
    text-align: center;
    font-size: 14px;
    font-weight: bold;
    line-height: 31px;
    letter-spacing: -0.35px;
    position: relative;
}
.title span {
    display: inline-block;
    transform: scaleX(0.895);
}
.title::after {
    content: "";
    position: absolute;
    right: -2px;
    bottom: -2px;
    width: 4px;
    height: 4px;
    background-color: #3584e4;
}
u {
    text-decoration: underline wavy #e02020 0.5px;
    text-underline-offset: 0;
    text-decoration-skip-ink: none;
}
.dark .a,
.dark .b,
.teal .a,
.teal .b,
.teal .c {
    color: #fff;
    font-weight: bold;
    border-right: 1px solid #cbd5e1;
}
.dark .b,
.teal .a,
.teal .b,
.teal .c {
    letter-spacing: -0.3px;
}
.dark .a,
.dark .b {
    background-color: #1e293b;
}
.teal .a,
.teal .b,
.teal .c {
    background-color: #14b8a6;
}
.kpi .a,
.kpi .b,
.data .a,
.data .b,
.data .c {
    border: solid #d0d3d6;
    border-width: 0 1px 1px 0;
}
.kpi .a,
.date .a,
.data .a {
    text-align: left;
    padding-left: 0.5px;
}
.data .a {
    letter-spacing: -0.32px;
}
.kpi .a,
.date .a {
    font-weight: bold;
    font-size: 9px;
    letter-spacing: -0.4px;
}
.kpi .a {
    background-color: #f8fafc;
}
.kpi .b {
    background-color: #fefce8;
    text-align: right;
    font-size: 10.5px;
    font-weight: bold;
    color: #1e293b;
    letter-spacing: -0.5px;
}
.date .b {
    letter-spacing: -0.5px;
}
.data .c {
    text-align: right;
    letter-spacing: -0.5px;
}
.data.mid .a {
    text-align: center;
}
.alt .a,
.alt .b,
.alt .c {
    background-color: #f8fafc;
}

/* Charts */
.chart {
    position: absolute;
    left: 365px;
    overflow: hidden;
}
.chart-bar {
    top: 61.5px;
    width: 438px;
    height: 313px;
}
.chart-pie {
    top: 268px;
    width: 340px;
    height: 170px;
}
.chart-line {
    top: 433px;
    width: 438px;
    height: 100px;
}
.ct {
    font-size: 16.5px;
    font-weight: bold;
    fill: #111;
}
.cl {
    font-size: 9.2px;
    fill: #222;
}
.axis {
    font-weight: bold;
    font-size: 8.5px;
}

/* Scrollbars */
.vscroll {
    width: 9px;
    background-color: #cecece;
    border-top: 1px solid #555;
    padding: 4px 2px;
}
.vscroll .thumb {
    width: 5px;
    height: 250px;
    border-radius: 3px;
    background-color: #858585;
}
.hscroll {
    width: 1151px;
    height: 10px;
    padding: 2px;
    background: linear-gradient(#666, #666) right 1px center / 1px 6px no-repeat #cecece;
}
.hscroll .thumb {
    width: 536px;
    height: 6px;
    border-radius: 3px;
    background-color: #808080;
}

/* Sheet tabs */
.tabs {
    display: flex;
    height: 16px;
    line-height: 15px;
    color: #444;
    font-size: 8.6px;
    letter-spacing: -0.3px;
}
.nav {
    width: 60px;
    height: 12px;
    margin: 2px 0 0 6px;
}
.add {
    width: 14px;
    height: 14px;
    margin: 1px 13.5px 0 8px;
}
.tabs span {
    width: 60.5px;
}
.tabs .active {
    width: 54px;
    height: 15px;
    background-color: #fff;
    border-bottom: 2px solid #8b8e8b;
    text-align: center;
    font-weight: bold;
    color: #333;
}
.tabs .last {
    width: 55px;
    height: 12px;
    padding-left: 10px;
    border-right: 1px solid #ccc;
}

/* Sidebar */
.sidebar {
    width: 39px;
    border-left: 1px solid #d3d0cd;
    display: flex;
    flex-direction: column;
    align-items: center;
    gap: 13px;
    padding-top: 6px;
    position: relative;
}
.sidebar svg {
    width: 16px;
    height: 16px;
}
.sidebar .handle {
    position: absolute;
    left: -1px;
    top: 268px;
    width: 5px;
    height: 50px;
}
.sidebar .fx {
    font-size: 17px;
}

/* Status bar */
.statusbar {
    height: 16px;
    display: flex;
    align-items: center;
    border-top: 1px solid #d3d0cd;
    line-height: 13px;
    font-size: 8.4px;
    white-space: nowrap;
}
.statusbar div {
    height: 13px;
    border-right: 1px solid #e0dedc;
    flex: none;
}
.doc {
    width: 12px;
    height: 12px;
    margin: 0 9px 0 6px;
}
.statusbar .s-sheet {
    width: 152px;
}
.statusbar .s-selected {
    width: 217px;
    padding-left: 5px;
}
.statusbar .s-style {
    width: 209px;
    padding-left: 6px;
}
.statusbar .s-lang {
    width: 213px;
    text-align: center;
    padding-right: 44px;
}
.statusbar .s-mode {
    width: 31px;
    padding-left: 6px;
}
.s-mode svg {
    width: 18px;
    height: 12px;
}
.statusbar .s-box {
    width: 20px;
}
.statusbar .s-sum {
    width: 183px;
    text-align: center;
}
.statusbar .s-zoom {
    width: 96px;
    padding: 1px 0 0 6px;
}
.s-zoom svg {
    width: 86px;
    height: 10px;
}
.statusbar .s-pct {
    border: 0;
    padding-left: 5px;
}
```
